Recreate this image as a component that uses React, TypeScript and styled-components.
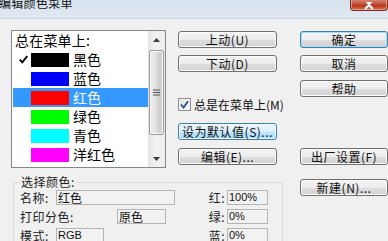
import React from "react";
import styled, { createGlobalStyle, css } from "styled-components";

const Global = createGlobalStyle`
  html, body { margin: 0; padding: 0; background: #f0f0f0; }
  * { box-sizing: border-box; }
`;

const FONT = `"Noto Sans CJK SC", "Liberation Sans", sans-serif`;

const Window = styled.div`
  width: 388px;
  height: 241px;
  overflow: hidden;
  background: #f0f0f0;
  display: flex;
  flex-direction: column;
  font-family: ${FONT};
  color: #000;
`;

const TitleBar = styled.div`
  height: 19px;
  flex: none;
  display: flex;
  justify-content: space-between;
  align-items: flex-start;
  background: linear-gradient(#d7e3ef, #dfe8f1);
  border-bottom: 1px solid #c9d5e1;
`;

const TitleText = styled.div`
  font-size: 12px;
  line-height: 14px;
  margin-top: -4px;
  margin-left: -1px;
  color: #111;
  letter-spacing: 0.3px;
`;

const CloseButton = styled.div`
  width: 38px;
  height: 12px;
  margin-top: -1px;
  border: 1px solid #7a2d20;
  border-top: none;
  border-radius: 0 0 4px 4px;
  background: linear-gradient(#d98c7c, #c4533c 45%, #b8371f 60%, #d86b4d);
  display: flex;
  justify-content: center;
  align-items: flex-end;
  box-shadow: inset 0 0 0 1px rgba(255, 220, 200, 0.5);
`;

const Body = styled.div`
  display: flex;
  padding: 11px 0 0 11px;
`;

const LeftArea = styled.div`
  display: flex;
  flex-direction: column;
`;

const TopRow = styled.div`
  display: flex;
`;

const ListBox = styled.div`
  width: 155px;
  height: 138px;
  border: 1px solid #828790;
  background: #fff;
  display: flex;
  overflow: hidden;
`;

const ListItems = styled.div`
  flex: 1;
  display: flex;
  flex-direction: column;
  overflow: hidden;
`;

const HeaderRow = styled.div`
  height: 19px;
  flex: none;
  font-size: 14px;
  line-height: 19px;
  padding-left: 3px;
  letter-spacing: 0.2px;
`;

const ItemRow = styled.div<{ $selected?: boolean }>`
  height: 19px;
  flex: none;
  display: flex;
  align-items: center;
  margin-left: 1px;
  font-size: 14px;
  line-height: 19px;
  ${(p) =>
    p.$selected &&
    css`
      background: #3399ff;
      color: #fff;
    `}
`;

const CheckSlot = styled.div`
  width: 18px;
  height: 19px;
  display: flex;
  align-items: center;
  justify-content: center;
  padding-left: 2px;
`;

const Swatch = styled.div<{ $color: string }>`
  width: 38px;
  height: 14px;
  background: ${(p) => p.$color};
  margin-right: 4px;
`;

const ScrollBar = styled.div`
  width: 17px;
  flex: none;
  display: flex;
  flex-direction: column;
  background: linear-gradient(90deg, #e3e3e3, #f2f2f2 40%, #ececec);
`;

const ArrowButton = styled.div`
  height: 17px;
  flex: none;
  display: flex;
  align-items: center;
  justify-content: center;
`;

const Thumb = styled.div`
  margin: 2px 1px 0 1px;
  height: 85px;
  flex: none;
  border: 1px solid #9a9a9a;
  border-radius: 2px;
  background: linear-gradient(90deg, #eeeeee, #e2e2e2 50%, #d4d4d4 51%, #cfcfcf);
  box-shadow: inset 0 0 0 1px #f8f8f8;
  display: flex;
  align-items: center;
  justify-content: center;
`;

const Track = styled.div`
  flex: 1;
`;

const MiddleColumn = styled.div`
  width: 99px;
  margin-left: 12px;
  display: flex;
  flex-direction: column;
`;

const RightColumn = styled.div`
  width: 91px;
  margin-left: 17px;
  display: flex;
  flex-direction: column;
`;

type Variant = "normal" | "default" | "hover";

const Button = styled.div<{ $variant?: Variant; $mt: number }>`
  height: 17px;
  flex: none;
  margin-top: ${(p) => p.$mt}px;
  border: 1px solid #707070;
  border-radius: 3px;
  background: linear-gradient(#f4f4f4 0%, #ececec 50%, #dedede 51%, #d2d2d2 100%);
  box-shadow: inset 0 0 0 1px #fbfbfb;
  font-size: 12px;
  line-height: 15px;
  text-align: center;
  color: #111;
  letter-spacing: 0.5px;
  white-space: nowrap;
  ${(p) =>
    p.$variant === "default" &&
    css`
      border-color: #3c7fb1;
      box-shadow: inset 0 0 0 1px #a9dcf6;
    `}
  ${(p) =>
    p.$variant === "hover" &&
    css`
      border-color: #3c7fb1;
      background: linear-gradient(#eaf6fd 0%, #d9f0fc 50%, #bee6fd 51%, #a7d9f5 100%);
      box-shadow: inset 0 0 0 1px #f0faff;
    `}
`;

const CheckRow = styled.label`
  display: flex;
  align-items: center;
  margin-top: 26px;
  height: 13px;
  width: 120px;
  font-size: 12px;
  line-height: 13px;
  color: #111;
  white-space: nowrap;
`;

const CheckBox = styled.div`
  width: 13px;
  height: 13px;
  flex: none;
  border: 1px solid #8e8f8f;
  background: linear-gradient(135deg, #dcdcdc, #fbfbfb);
  box-shadow: inset 0 0 0 1px #f4f4f4;
  margin-right: 3px;
  display: flex;
  align-items: center;
  justify-content: center;
`;

const GroupBox = styled.fieldset`
  margin: 7px 0 0 2px;
  width: 270px;
  height: 80px;
  padding: 0 6px;
  border: 1px solid #d5dfe5;
  border-radius: 3px;
  display: flex;
  flex-direction: column;
  gap: 4px;
`;

const Legend = styled.legend`
  padding: 0 1px;
  font-size: 12px;
  line-height: 14px;
  color: #222;
  letter-spacing: 0.5px;
`;

const FieldRow = styled.div<{ $first?: boolean }>`
  display: flex;
  height: 15px;
  margin-top: ${(p) => (p.$first ? 1 : 0)}px;
`;

const LeftCell = styled.div`
  width: 186px;
  display: flex;
`;

const RightCell = styled.div`
  display: flex;
`;

const FieldLabel = styled.div<{ $w: number; $right?: boolean }>`
  width: ${(p) => p.$w}px;
  font-size: 12px;
  line-height: 15px;
  color: #222;
  letter-spacing: 0.5px;
  text-align: ${(p) => (p.$right ? "right" : "left")};
  padding-right: ${(p) => (p.$right ? 2 : 0)}px;
`;

const Field = styled.div<{ $w: number }>`
  width: ${(p) => p.$w}px;
  height: 15px;
  border: 1px solid #b4b4b4;
  background: #f2f2f2;
  font-size: 11px;
  line-height: 13px;
  padding-left: 1px;
  color: #111;
  font-family: "Liberation Sans", "Noto Sans CJK SC", sans-serif;
  white-space: nowrap;
  overflow: hidden;
`;

const FieldCJK = styled(Field)`
  font-family: ${FONT};
  font-size: 12px;
`;

const items = [
  { name: "黑色", color: "#000000", checked: true },
  { name: "蓝色", color: "#0000ff" },
  { name: "红色", color: "#ff0000", selected: true },
  { name: "绿色", color: "#00ff00" },
  { name: "青色", color: "#00ffff" },
  { name: "洋红色", color: "#ff00ff" },
  { name: "黄色", color: "#ffff00" },
];

export default function App() {
  return (
    <>
      <Global />
      <Window>
        <TitleBar>
          <TitleText>编辑颜色菜单</TitleText>
          <CloseButton>
            <svg width="12" height="8" viewBox="0 0 12 8">
              <path d="M1 -3 L6 2 L11 -3 M2 7 L6 3 L10 7" stroke="#fff" strokeWidth="2.2" fill="none" />
            </svg>
          </CloseButton>
        </TitleBar>
        <Body>
          <LeftArea>
            <TopRow>
              <ListBox>
                <ListItems>
                  <HeaderRow>总在菜单上:</HeaderRow>
                  {items.map((it) => (
                    <ItemRow key={it.name} $selected={it.selected}>
                      <CheckSlot>
                        {it.checked && (
                          <svg width="9" height="9" viewBox="0 0 9 9">
                            <path d="M0.8 4.6 L3.3 7.4 L8.3 1.2" stroke="#000" strokeWidth="1.9" fill="none" />
                          </svg>
                        )}
                      </CheckSlot>
                      <Swatch $color={it.color} />
                      <span>{it.name}</span>
                    </ItemRow>
                  ))}
                </ListItems>
                <ScrollBar>
                  <ArrowButton>
                    <svg width="7" height="4" viewBox="0 0 7 4">
                      <path d="M0 4 L3.5 0 L7 4 Z" fill="#3c3c3c" />
                    </svg>
                  </ArrowButton>
                  <Thumb>
                    <svg width="7" height="7" viewBox="0 0 7 7">
                      <path d="M0 1 H7 M0 3.5 H7 M0 6 H7" stroke="#555" strokeWidth="1" />
                    </svg>
                  </Thumb>
                  <Track />
                  <ArrowButton>
                    <svg width="7" height="4" viewBox="0 0 7 4">
                      <path d="M0 0 L3.5 4 L7 0 Z" fill="#3c3c3c" />
                    </svg>
                  </ArrowButton>
                </ScrollBar>
              </ListBox>
              <MiddleColumn>
                <Button $mt={1}>上动(U)</Button>
                <Button $mt={7}>下动(D)</Button>
                <CheckRow>
                  <CheckBox>
                    <svg width="9" height="9" viewBox="0 0 9 9">
                      <path d="M1 4.5 L3.5 7.5 L8 1.2" stroke="#2a4f8f" strokeWidth="1.8" fill="none" />
                    </svg>
                  </CheckBox>
                  总是在菜单上(M)
                </CheckRow>
                <Button $mt={12} $variant="hover">设为默认值(S)...</Button>
                <Button $mt={8}>编辑(E)...</Button>
              </MiddleColumn>
            </TopRow>
            <GroupBox>
              <Legend>选择颜色:</Legend>
              <FieldRow $first>
                <LeftCell>
                  <FieldLabel $w={36}>名称:</FieldLabel>
                  <FieldCJK $w={119}>红色</FieldCJK>
                </LeftCell>
                <RightCell>
                  <FieldLabel $w={21} $right>红:</FieldLabel>
                  <Field $w={41}>100%</Field>
                </RightCell>
              </FieldRow>
              <FieldRow>
                <LeftCell>
                  <FieldLabel $w={97}>打印分色:</FieldLabel>
                  <FieldCJK $w={49}>原色</FieldCJK>
                </LeftCell>
                <RightCell>
                  <FieldLabel $w={21} $right>绿:</FieldLabel>
                  <Field $w={41}>0%</Field>
                </RightCell>
              </FieldRow>
              <FieldRow>
                <LeftCell>
                  <FieldLabel $w={36}>模式:</FieldLabel>
                  <Field $w={48}>RGB</Field>
                </LeftCell>
                <RightCell>
                  <FieldLabel $w={21} $right>蓝:</FieldLabel>
                  <Field $w={41}>0%</Field>
                </RightCell>
              </FieldRow>
            </GroupBox>
          </LeftArea>
          <RightColumn>
            <Button $mt={1} $variant="default">确定</Button>
            <Button $mt={7}>取消</Button>
            <Button $mt={8}>帮助</Button>
            <Button $mt={51}>出厂设置(F)</Button>
            <Button $mt={14}>新建(N)...</Button>
          </RightColumn>
        </Body>
      </Window>
    </>
  );
}
